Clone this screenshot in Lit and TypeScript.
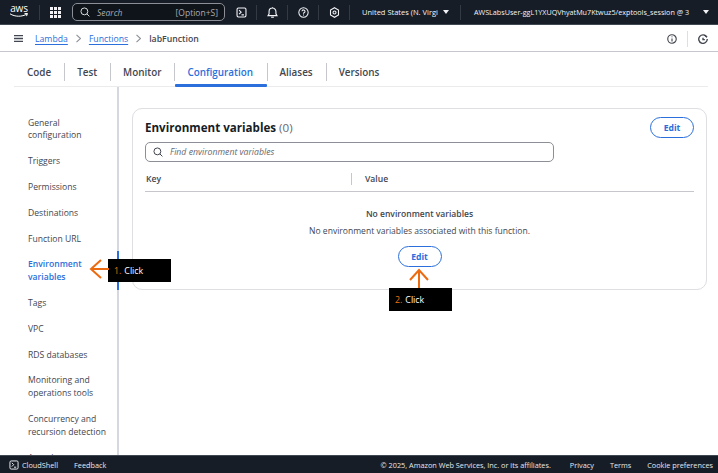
import { LitElement, css, html, svg } from "lit";
import { customElement } from "lit/decorators.js";

const tabs = ["Code", "Test", "Monitor", "Configuration", "Aliases", "Versions"];
const sideItems = [
  "General configuration",
  "Triggers",
  "Permissions",
  "Destinations",
  "Function URL",
  "Environment variables",
  "Tags",
  "VPC",
  "RDS databases",
  "Monitoring and operations tools",
  "Concurrency and recursion detection",
  "Asynchronous invocation",
];

const terminalIcon = (size: number) => html`<svg width=${size} height=${size} viewBox="0 0 16 16" fill="none" stroke="currentColor" stroke-width="1.6">
  <rect x="1.5" y="1.5" width="13" height="13" rx="2"></rect>
  <path d="M4.500 4.500 7.500 7.500l-3 3M8 11.500h3.500"></path>
</svg>`;

const searchIcon = (size: number) => html`<svg width=${size} height=${size} viewBox="0 0 16 16" fill="none" stroke="currentColor" stroke-width="1.6">
  <circle cx="7" cy="7" r="5.500"></circle>
  <path d="m11 11 4 4"></path>
</svg>`;

const gridDots = [0, 4, 8].flatMap((y) =>
  [0, 4, 8].map((x) => svg`<rect x=${x} y=${y} width="3" height="3"></rect>`)
);

@customElement("app-root")
export class AppRoot extends LitElement {
  static override styles = css`
    :host {
      display: flex;
      flex-direction: column;
      position: relative;
      width: 718px;
      height: 473px;
      overflow: hidden;
      background: #fff;
      color: #424650;
      font-family: "Open Sans", "Noto Sans", sans-serif;
      font-size: 9px;
    }
    svg {
      display: block;
      flex: none;
    }

    /* ---------- top nav ---------- */
    .topnav {
      height: 24px;
      flex: none;
      display: flex;
      align-items: center;
      background: #161d26;
      border-bottom: 1px solid #414750;
      color: #f3f3f7;
    }
    .logo {
      width: 20px;
      margin: -2px 0 0 9px;
      color: #fff;
      flex: none;
    }
    .logo-text {
      font-size: 10px;
      line-height: 9px;
      letter-spacing: -0.2px;
      text-align: center;
    }
    .sep {
      width: 1px;
      height: 15px;
      background: #333a44;
      flex: none;
    }
    .grid {
      margin-left: 10px;
    }
    .search {
      width: 153px;
      height: 18px;
      box-sizing: border-box;
      margin-left: 11px;
      padding: 0 6px 0 7px;
      display: flex;
      align-items: center;
      gap: 7px;
      border: 1px solid #8c8f96;
      border-radius: 5px;
      background: #0f141a;
      color: #d5dbdb;
    }
    .search i {
      flex: 1;
      color: #a8adb5;
      font-size: 8.500px;
    }
    .search span {
      color: #a8adb5;
      font-size: 8.500px;
    }
    .nav-icon {
      width: 30px;
      display: flex;
      justify-content: center;
      flex: none;
    }
    .nav-icon.first {
      margin-left: 1px;
    }
    .region {
      margin-left: 12px;
      width: 81px;
      flex: none;
      white-space: nowrap;
      font-size: 7.500px;
      font-weight: 500;
    }
    .caret {
      width: 0;
      height: 0;
      border-left: 3px solid transparent;
      border-right: 3px solid transparent;
      border-top: 4px solid #f3f3f7;
      flex: none;
    }
    .sep.after-region {
      margin-left: 11px;
    }
    .user {
      margin-left: 13px;
      width: 229px;
      flex: none;
      white-space: nowrap;
      font-size: 7.200px;
      font-weight: 500;
    }

    /* ---------- breadcrumb ---------- */
    .crumbs {
      height: 25px;
      flex: none;
      display: flex;
      align-items: center;
      padding: 1px 10px 0 14px;
      border-bottom: 1px solid #c6c6cd;
      font-size: 8.700px;
      font-weight: 600;
    }
    .crumbs a {
      color: #2a6fdb;
      text-decoration: underline;
      text-underline-offset: 2px;
      font-weight: 500;
    }
    .crumbs .chev {
      margin: 0 8px;
      color: #8c8f96;
    }
    .burger {
      margin-right: 12px;
      color: #424650;
    }
    .crumbs .spacer {
      flex: 1;
    }
    .crumbs .vsep {
      width: 1px;
      height: 16px;
      margin: 0 10px;
      background: #dedee3;
    }

    /* ---------- tabs ---------- */
    .tabs {
      height: 35px;
      flex: none;
      display: flex;
      align-items: stretch;
      margin: 0 10px 0 14px;
      padding-top: 5px;
      border-bottom: 1px solid #e9ebed;
      box-sizing: border-box;
    }
    .tab {
      position: relative;
      display: flex;
      align-items: center;
      padding: 0 13px;
      font-size: 9.900px;
      font-weight: 600;
      color: #424650;
    }
    .tab + .tab::before {
      content: "";
      position: absolute;
      left: 0;
      top: 6px;
      height: 18px;
      width: 1px;
      background: #c6c6cd;
    }
    .tab.active {
      color: #2a6fdb;
      padding-right: 13.500px;
    }
    .tab.active::after {
      content: "";
      position: absolute;
      left: 1px;
      right: 0;
      bottom: -1px;
      height: 3px;
      background: #2a6fdb;
      border-radius: 1px;
    }

    /* ---------- body ---------- */
    .main {
      flex: 1;
      min-height: 0;
      display: flex;
      overflow: hidden;
    }
    .side {
      width: 89px;
      flex: none;
      padding: 29.500px 0 0 28px;
      border-right: 2px solid #d5d8e0;
      position: relative;
    }
    .side-item {
      width: 82px;
      line-height: 12.900px;
      margin-bottom: 12.900px;
      font-size: 8.600px;
      font-weight: 500;
    }
    .side-item.active {
      color: #2a6fdb;
      font-weight: 600;
    }
    .side-marker {
      position: absolute;
      right: -2px;
      top: 164px;
      width: 2px;
      height: 39px;
      background: #2a6fdb;
    }
    .card {
      width: 575px;
      height: 182px;
      flex: none;
      box-sizing: border-box;
      margin: 21px 0 0 13px;
      padding: 8px 12px 0;
      border: 1px solid #dedee3;
      border-radius: 10px;
      display: flex;
      flex-direction: column;
    }
    .card-head {
      display: flex;
      align-items: center;
      justify-content: space-between;
      height: 21px;
    }
    .card-head h2 {
      margin: 0;
      font-size: 11.600px;
      font-weight: 700;
      color: #161d26;
    }
    .card-head h2 span {
      font-weight: 400;
      color: #656871;
    }
    .btn {
      width: 44px;
      height: 21px;
      box-sizing: border-box;
      display: flex;
      align-items: center;
      justify-content: center;
      border: 1px solid #2a6fdb;
      border-radius: 11px;
      color: #2a6fdb;
      font-size: 8.600px;
      font-weight: 700;
    }
    .filter {
      width: 409px;
      height: 20px;
      box-sizing: border-box;
      margin-top: 4px;
      padding: 0 7px;
      display: flex;
      align-items: center;
      gap: 7px;
      border: 1px solid #8c8f96;
      border-radius: 5px;
      color: #424650;
    }
    .filter i {
      font-size: 8.700px;
      color: #656871;
    }
    .thead {
      height: 25px;
      padding-top: 4px;
      display: flex;
      align-items: center;
      border-bottom: 1px solid #c6c6cd;
      font-size: 8.600px;
      font-weight: 600;
    }
    .thead .key {
      width: 205px;
      padding-left: 1px;
      border-right: 1px solid #c6c6cd;
      line-height: 12px;
    }
    .thead .value {
      padding-left: 13px;
    }
    .empty {
      flex: 1;
      display: flex;
      flex-direction: column;
      align-items: center;
      padding-top: 16px;
    }
    .empty b {
      font-size: 8.550px;
      font-weight: 600;
      line-height: 12px;
    }
    .empty p {
      margin: 5px 0 9px;
      font-size: 8.550px;
      line-height: 12px;
    }

    /* ---------- footer ---------- */
    .footer {
      height: 17px;
      flex: none;
      display: flex;
      align-items: center;
      padding: 0 5px 0 9px;
      background: #161d26;
      border-top: 1px solid #414750;
      color: #e8e8ec;
      font-size: 7.300px;
      font-weight: 500;
    }
    .footer .shell {
      margin-left: 3px;
    }
    .footer .feedback {
      margin-left: 16px;
    }
    .footer .copy {
      margin-left: auto;
      margin-right: 3px;
    }
    .footer .link {
      margin-left: 16px;
    }

    /* ---------- tutorial overlays ---------- */
    .callout {
      position: absolute;
      width: 63px;
      height: 23px;
      box-sizing: border-box;
      padding-left: 6px;
      display: flex;
      align-items: center;
      gap: 3px;
      background: #000;
      color: #fff;
      font-size: 8.800px;
      font-weight: 500;
    }
    .callout span {
      color: #ec7211;
    }
    .callout-1 {
      left: 108px;
      top: 259px;
    }
    .callout-2 {
      left: 389px;
      top: 288px;
    }
    .arrow {
      position: absolute;
      color: #ec6a10;
    }
    .arrow-1 {
      left: 89px;
      top: 259px;
    }
    .arrow-2 {
      left: 409px;
      top: 268px;
    }
  `;

  override render() {
    return html`
      <div class="topnav">
        <div class="logo">
          <div class="logo-text">aws</div>
          <svg width="20" height="5" viewBox="0 0 20 5" fill="none" stroke="currentColor" stroke-width="1">
            <path d="M1 .8C6 4 13 4 18 1M15.500.6l3-.1-1 2.600"></path>
          </svg>
        </div>
        <div class="sep" style="margin-left:10px"></div>
        <svg class="grid" width="11" height="11" viewBox="0 0 11 11" fill="currentColor">
          ${gridDots}
        </svg>
        <div class="search">${searchIcon(10)}<i>Search</i><span>[Option+S]</span></div>
        <div class="nav-icon first">${terminalIcon(11)}</div>
        <div class="sep"></div>
        <div class="nav-icon">
          <svg width="11" height="11" viewBox="0 0 16 16" fill="none" stroke="currentColor" stroke-width="1.600">
            <path d="M1.500 12.500h13L13 10V6.500a5 5 0 0 0-10 0V10l-1.500 2.500ZM6 15h4M8 1.500V.5"></path>
          </svg>
        </div>
        <div class="sep"></div>
        <div class="nav-icon">
          <svg width="11" height="11" viewBox="0 0 16 16" fill="none" stroke="currentColor" stroke-width="1.500">
            <circle cx="8" cy="8" r="6.800"></circle>
            <path d="M5.800 6.200A2.200 2.200 0 1 1 8 8.600v1.200M8 11v1.400"></path>
          </svg>
        </div>
        <div class="sep"></div>
        <div class="nav-icon">
          <svg width="11" height="11" viewBox="0 0 16 16" fill="none" stroke="currentColor" stroke-width="1.600">
            <path d="M8 1l5.800 3.400v7.200L8 15l-5.800-3.400V4.400L8 1Z"></path>
            <circle cx="8" cy="8" r="2.200"></circle>
          </svg>
        </div>
        <div class="sep"></div>
        <div class="region">United States (N. Virgi</div>
        <div class="caret"></div>
        <div class="sep after-region"></div>
        <div class="user">AWSLabsUser-ggL1YXUQVhyatMu7Ktwuz5/exptools_session @ 3</div>
        <div class="caret"></div>
      </div>

      <div class="crumbs">
        <svg class="burger" width="9" height="7" viewBox="0 0 9 7" fill="none" stroke="currentColor" stroke-width="1.300">
          <path d="M0 .7h9M0 3.500h9M0 6.300h9"></path>
        </svg>
        <a>Lambda</a>
        <svg class="chev" width="5" height="9" viewBox="0 0 5 9" fill="none" stroke="currentColor" stroke-width="1.100">
          <path d="m.5 .8 4 3.700-4 3.700"></path>
        </svg>
        <a>Functions</a>
        <svg class="chev" width="5" height="9" viewBox="0 0 5 9" fill="none" stroke="currentColor" stroke-width="1.100">
          <path d="m.5 .8 4 3.700-4 3.700"></path>
        </svg>
        <span>labFunction</span>
        <div class="spacer"></div>
        <svg width="10" height="10" viewBox="0 0 16 16" fill="none" stroke="currentColor" stroke-width="1.800">
          <circle cx="8" cy="8" r="6.800"></circle>
          <path d="M8 3.800v1.500M8 7v5"></path>
        </svg>
        <div class="vsep"></div>
        <svg width="10" height="10" viewBox="0 0 16 16" fill="none" stroke="currentColor" stroke-width="2.200">
          <path d="M14 5A6.800 6.800 0 1 0 14.800 8"></path>
          <path d="M10 1.500 14.500 5M8 6v3h3"></path>
        </svg>
      </div>

      <div class="tabs">
        ${tabs.map(
          (t) => html`<div class="tab ${t === "Configuration" ? "active" : ""}">${t}</div>`
        )}
      </div>

      <div class="main">
        <div class="side">
          ${sideItems.map(
            (s) =>
              html`<div class="side-item ${s === "Environment variables" ? "active" : ""}">${s}</div>`
          )}
          <div class="side-marker"></div>
        </div>
        <div class="card">
          <div class="card-head">
            <h2>Environment variables <span>(0)</span></h2>
            <div class="btn">Edit</div>
          </div>
          <div class="filter">${searchIcon(10)}<i>Find environment variables</i></div>
          <div class="thead">
            <div class="key">Key</div>
            <div class="value">Value</div>
          </div>
          <div class="empty">
            <b>No environment variables</b>
            <p>No environment variables associated with this function.</p>
            <div class="btn">Edit</div>
          </div>
        </div>
      </div>

      <div class="footer">
        ${terminalIcon(10)}
        <span class="shell">CloudShell</span>
        <span class="feedback">Feedback</span>
        <span class="copy">© 2025, Amazon Web Services, Inc. or its affiliates.</span>
        <span class="link">Privacy</span>
        <span class="link">Terms</span>
        <span class="link">Cookie preferences</span>
      </div>

      <div class="callout callout-1"><span>1.</span> Click</div>
      <svg class="arrow arrow-1" width="20" height="20" viewBox="0 0 20 20" fill="none" stroke="currentColor" stroke-width="2">
        <path d="M20 10H2M12 1l-10 9 10 9"></path>
      </svg>
      <div class="callout callout-2"><span>2.</span> Click</div>
      <svg class="arrow arrow-2" width="20" height="20" viewBox="0 0 20 20" fill="none" stroke="currentColor" stroke-width="2">
        <path d="M10 20V2M1 12l9-10 9 10"></path>
      </svg>
    `;
  }
}

declare global {
  interface HTMLElementTagNameMap {
    "app-root": AppRoot;
  }
}
